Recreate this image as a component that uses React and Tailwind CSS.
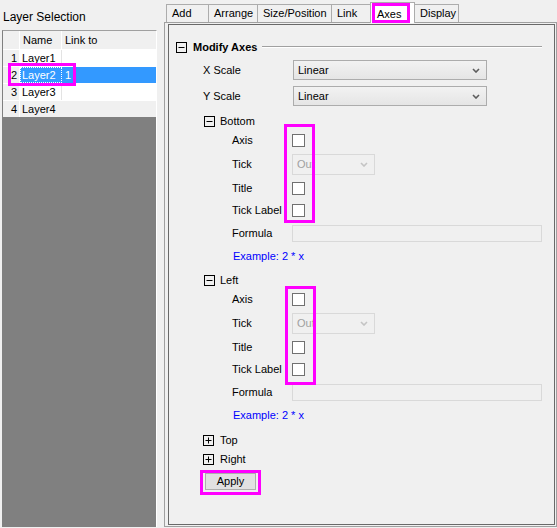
import React from 'react';

const Toggle = ({ plus }) => (
  <svg width="11" height="11" viewBox="0 0 11 11" className="shrink-0">
    <rect x="0.5" y="0.5" width="10" height="10" fill="none" stroke="#000" />
    <path d="M2.5 5.5h6" stroke="#000" />
    {plus && <path d="M5.5 2.5v6" stroke="#000" />}
  </svg>
);

const Chevron = ({ color }) => (
  <svg width="8" height="5" viewBox="0 0 8 5" className="shrink-0">
    <path d="M1 1l3 3 3-3" fill="none" stroke={color} strokeWidth="1.6" />
  </svg>
);

const Combo = ({ value, disabled, className }) => (
  <div
    className={
      'flex h-full items-center justify-between border pl-[4px] pr-[6px] ' +
      (disabled
        ? 'border-[#d9d9d9] bg-[#f0f0f0] text-[#a0a0a0] '
        : 'border-[#acacac] bg-gradient-to-b from-[#f2f2f2] to-[#e5e5e5] text-black ') +
      className
    }
  >
    <span>{value}</span>
    <Chevron color={disabled ? '#c4c4c4' : '#5c5c5c'} />
  </div>
);

const Check = () => <div className="h-[13px] w-[13px] shrink-0 border border-[#707070] bg-white" />;

const SubRow = ({ label, h, mt, children }) => (
  <div className={'flex items-center pl-[63px] ' + h + ' ' + mt}>
    <span className="w-[60px] shrink-0 whitespace-nowrap">{label}</span>
    {children}
  </div>
);

const Section = ({ name, tops }) => (
  <>
    <div className={'flex h-[14px] items-center gap-[5px] pl-[35px] ' + tops[0]}>
      <Toggle />
      <span>{name}</span>
    </div>
    <SubRow label="Axis" h="h-[13px]" mt={tops[1]}>
      <Check />
    </SubRow>
    <SubRow label="Tick" h="h-[21px]" mt="mt-[7px]">
      <Combo value="Out" disabled className="w-[83px]" />
    </SubRow>
    <SubRow label="Title" h="h-[13px]" mt="mt-[7px]">
      <Check />
    </SubRow>
    <SubRow label="Tick Label" h="h-[13px]" mt="mt-[9px]">
      <Check />
    </SubRow>
    <SubRow label="Formula" h="h-[17px]" mt="mt-[8px]">
      <div className="h-full w-[250px] border border-[#d9d9d9] bg-[#f0f0f0]" />
    </SubRow>
    <div className="mt-[7px] flex h-[14px] items-center pl-[64px] text-[#0000ff]">Example: 2 * x</div>
  </>
);

const tabs = [
  { name: 'Add', w: 'w-[43px]' },
  { name: 'Arrange', w: 'w-[50px]' },
  { name: 'Size/Position', w: 'w-[75px]' },
  { name: 'Link', w: 'w-[40px]' },
  { name: 'Axes', w: 'w-[45px]', active: true },
  { name: 'Display', w: 'w-[45px]' },
];

const layers = [
  { n: 1, name: 'Layer1', link: '' },
  { n: 2, name: 'Layer2', link: '1', selected: true },
  { n: 3, name: 'Layer3', link: '' },
];

export default function App() {
  return (
    <div className="relative flex h-[528px] w-[557px] overflow-hidden bg-[#f0f0f0] font-['Liberation_Sans',Arial,sans-serif] text-[11px] text-black">
      {/* Layer list */}
      <div className="flex w-[164px] shrink-0 flex-col">
        <div className="h-[30px] pl-[3px] pt-[10px] text-[12px] leading-[14px]">Layer Selection</div>
        <div className="ml-[2px] flex h-[497px] w-[155px] flex-col border-l border-t border-r border-l-[#808080] border-t-[#a0a0a0] border-r-white bg-[#808080]">
          <div className="flex h-[19px] border-b border-white bg-[#f0f0f0]">
            <div className="w-[17px] border-r border-white" />
            <div className="flex w-[42px] items-center border-r border-white pl-[3px]">Name</div>
            <div className="flex flex-1 items-center pl-[3px]">Link to</div>
          </div>
          {layers.map((l) => (
            <div key={l.n} className="flex h-[17px] border-b border-white">
              <div className="flex w-[17px] items-center justify-end border-r border-white bg-[#f0f0f0] pr-[2px]">{l.n}</div>
              {l.selected ? (
                <>
                  <div className="flex w-[42px] items-center bg-[#3399ff] pl-[2px] text-white outline outline-dotted outline-white outline-offset-[-1px]">{l.name}</div>
                  <div className="flex flex-1 items-center bg-[#3399ff] pl-[3px] text-white">{l.link}</div>
                </>
              ) : (
                <>
                  <div className="flex w-[42px] items-center border-r border-[#e3e3e3] bg-white pl-[2px]">{l.name}</div>
                  <div className="flex flex-1 items-center bg-white pl-[3px]">{l.link}</div>
                </>
              )}
            </div>
          ))}
          <div className="flex h-[16px] bg-[#f0f0f0]">
            <div className="flex w-[17px] items-center justify-end border-r border-white pr-[2px]">4</div>
            <div className="flex items-center pl-[2px]">Layer4</div>
          </div>
        </div>
      </div>

      {/* Tab control */}
      <div className="flex flex-1 flex-col">
        <div className="flex h-[22px] items-end pl-[2px]">
          {tabs.map((t, i) =>
            t.active ? (
              <div key={t.name} className={'relative z-10 -mb-px flex h-[21px] items-start border border-b-0 border-[#acacac] bg-white pl-[6px] pt-[3px] ' + t.w + (i ? ' -ml-px' : '')}>
                {t.name}
              </div>
            ) : (
              <div key={t.name} className={'flex h-[18px] items-center border border-b-0 border-[#acacac] bg-[#f0f0f0] pl-[5px] ' + t.w + (i ? ' -ml-px' : '')}>
                {t.name}
              </div>
            )
          )}
        </div>
        <div className="flex h-[505px] w-[393px] border border-[#a0a0a0]">
          <div className="mb-px ml-[3px] mr-px mt-px flex flex-1 flex-col border border-[#696969]">
            {/* Modify Axes */}
            <div className="mt-[12px] flex h-[20px] items-center pl-[7px]">
              <Toggle />
              <span className="ml-[6px] font-bold">Modify Axes</span>
              <div className="ml-[5px] mr-[12px] flex-1 border-t border-b border-t-[#a0a0a0] border-b-white" />
            </div>
            <div className="mt-[3px] flex h-[20px] items-center pl-[34px]">
              <span className="w-[90px] shrink-0">X Scale</span>
              <Combo value="Linear" className="w-[194px]" />
            </div>
            <div className="mt-[6px] flex h-[20px] items-center pl-[34px]">
              <span className="w-[90px] shrink-0">Y Scale</span>
              <Combo value="Linear" className="w-[194px]" />
            </div>

            <Section name="Bottom" tops={['mt-[8px]', 'mt-[6px]']} />
            <Section name="Left" tops={['mt-[10px]', 'mt-[6px]']} />

            <div className="mt-[11px] flex h-[14px] items-center gap-[6px] pl-[34px]">
              <Toggle plus />
              <span>Top</span>
            </div>
            <div className="mt-[5px] flex h-[14px] items-center gap-[6px] pl-[34px]">
              <Toggle plus />
              <span>Right</span>
            </div>
            <div className="mt-[7px] pl-[36px]">
              <div className="flex h-[17px] w-[51px] items-center justify-center border border-[#adadad] bg-[#e1e1e1]">Apply</div>
            </div>
          </div>
        </div>
      </div>

      {/* Highlight annotations */}
      <div className="absolute left-[8px] top-[63px] h-[23px] w-[68px] border-[3px] border-[#ff00ff]" />
      <div className="absolute left-[372px] top-[3px] z-20 h-[20px] w-[38px] border-[3px] border-[#ff00ff]" />
      <div className="absolute left-[284px] top-[124px] h-[99px] w-[31px] border-[3px] border-[#ff00ff]" />
      <div className="absolute left-[285px] top-[286px] h-[99px] w-[31px] border-[3px] border-[#ff00ff]" />
      <div className="absolute left-[200px] top-[470px] h-[25px] w-[61px] border-[3px] border-[#ff00ff]" />
    </div>
  );
}
